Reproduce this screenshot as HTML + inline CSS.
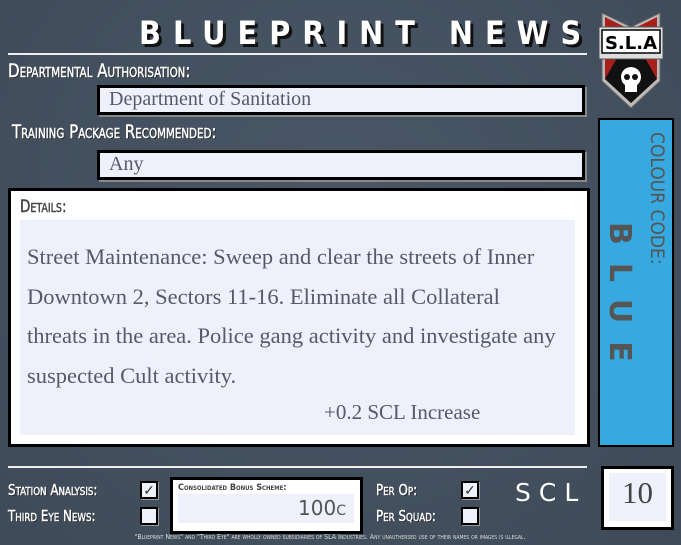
<!DOCTYPE html>
<html><head><meta charset="utf-8"><style>
*{margin:0;padding:0;box-sizing:border-box}
body{width:681px;height:545px;overflow:hidden;background:#44505e;background:radial-gradient(ellipse at 50% 40%,#4a5766,#3e4a58);position:relative;font-family:"Liberation Sans",sans-serif}
.a{position:absolute}
.lbl{color:#fff;font-family:"DejaVu Sans Condensed","Liberation Sans Narrow","Liberation Sans",sans-serif;font-variant:small-caps;text-shadow:1px 1px 0 #222;white-space:nowrap;transform-origin:0 0;transform:scaleX(0.88);-webkit-text-stroke:0.4px #fff}
.fld{background:#eef0fc;border:3px solid #000;box-shadow:2px 2px 0 #888;font-family:"Liberation Serif",serif;color:#555a6a;font-size:20px;padding-left:9px;line-height:23px}
.cb{width:18px;height:18px;background:#eef0fc;border:2px solid #000;box-shadow:1px 1px 0 #999;font-size:14px;line-height:14px;text-align:center;color:#333}
</style></head><body>
<div class="a" style="left:139px;top:14px;font-size:32px;font-weight:bold;color:#fff;letter-spacing:12px;text-shadow:3px 3px 0 #111;white-space:nowrap;font-family:'DejaVu Sans Condensed','DejaVu Sans',sans-serif">BLUEPRINT NEWS</div>
<div class="a" style="left:8px;top:53px;width:579px;height:2px;background:#eee"></div>
<div class="a lbl" style="left:8px;top:60px;font-size:19px">Departmental Authorisation:</div>
<div class="a fld" style="left:97px;top:85px;width:488px;height:30px">Department of Sanitation</div>
<div class="a lbl" style="left:12px;top:121px;font-size:19px">Training Package Recommended:</div>
<div class="a fld" style="left:97px;top:150px;width:488px;height:30px">Any</div>
<div class="a" style="left:8px;top:188px;width:582px;height:259px;background:#fff;border:3px solid #000"></div>
<div class="a" style="left:20px;top:197px;font-size:17px;color:#444;font-family:'DejaVu Sans Condensed',sans-serif;font-variant:small-caps;-webkit-text-stroke:0.4px #444;transform-origin:0 0;transform:scaleX(0.88)">Details:</div>
<div class="a" style="left:20px;top:220px;width:555px;height:215px;background:#eef0fc;font-family:'Liberation Serif',serif;font-size:22.5px;color:#555a6a;line-height:39.5px;padding:17px 0 0 7px;white-space:nowrap">Street Maintenance: Sweep and clear the streets of Inner<br>Downtown 2, Sectors 11-16. Eliminate all Collateral<br>threats in the area. Police gang activity and investigate any<br>suspected Cult activity.<div style="padding-left:297px;line-height:34px;font-size:21px">+0.2 SCL Increase</div></div>
<div class="a" style="left:598px;top:118px;width:76px;height:329px;background:#36a9e0;border:2px solid #000"></div>
<div class="a" style="left:646px;top:132px;transform-origin:0 0;transform:rotate(90deg) translateY(-22px);font-size:19px;color:#555;white-space:nowrap;font-family:'DejaVu Sans Condensed',sans-serif">COLOUR CODE:</div>
<div class="a" style="left:637px;top:222px;transform-origin:0 0;transform:rotate(90deg);font-size:30px;font-weight:bold;color:#555;letter-spacing:18px;white-space:nowrap;font-family:'DejaVu Sans',sans-serif">BLUE</div>
<svg class="a" style="left:599px;top:11px" width="64" height="100" viewBox="0 0 64 100">
<path d="M3 2 L3 70 L32 97 L61 70 L61 2 L32 16 Z" fill="#bbb" stroke="#666" stroke-width="1"/>
<path d="M6 6 L6 68 L32 92 L58 68 L58 6 L32 19 Z" fill="#a8201c"/>
<path d="M22 40 L6 68 L32 92 L58 68 L42 40 Z" fill="#111"/>
<rect x="0" y="16" width="64" height="32" fill="#ddd" stroke="#555"/>
<rect x="3" y="19" width="58" height="23" fill="#fff" stroke="#000" stroke-width="1.5"/>
<text x="32" y="38" text-anchor="middle" font-family="DejaVu Sans" font-weight="bold" font-size="18" fill="#000">S.L.A</text>
<ellipse cx="32" cy="66" rx="10" ry="10" fill="#fff"/>
<rect x="26" y="72" width="12" height="9" fill="#fff"/>
<circle cx="28" cy="66" r="3" fill="#111"/><circle cx="36" cy="66" r="3" fill="#111"/>
</svg>
<div class="a" style="left:8px;top:466px;width:579px;height:2px;background:#eee"></div>
<div class="a lbl" style="left:8px;top:481px;font-size:15px">Station Analysis:</div>
<div class="a lbl" style="left:8px;top:507px;font-size:15px">Third Eye News:</div>
<div class="a cb" style="left:140px;top:481px">✓</div>
<div class="a cb" style="left:140px;top:507px"></div>
<div class="a" style="left:170px;top:477px;width:193px;height:57px;background:#fff;border:3px solid #000"></div>
<div class="a" style="left:178px;top:483px;font-size:9px;font-weight:bold;color:#444;font-variant:small-caps;font-family:'DejaVu Sans Condensed',sans-serif">Consolidated Bonus Scheme:</div>
<div class="a" style="left:178px;top:494px;width:176px;height:29px;background:#eef0fc;text-align:right;padding-right:8px;font-size:20px;line-height:29px;color:#555;font-family:'DejaVu Sans',sans-serif;font-variant:small-caps">100c</div>
<div class="a lbl" style="left:376px;top:481px;font-size:15px">Per Op:</div>
<div class="a lbl" style="left:376px;top:507px;font-size:15px">Per Squad:</div>
<div class="a cb" style="left:461px;top:481px">✓</div>
<div class="a cb" style="left:461px;top:507px"></div>
<div class="a" style="left:515px;top:478px;font-size:25px;color:#fff;letter-spacing:8px;font-family:'DejaVu Sans',sans-serif">SCL</div>
<div class="a" style="left:601px;top:466px;width:73px;height:64px;background:#fff;border:3px solid #000"></div>
<div class="a" style="left:609px;top:473px;width:57px;height:48px;background:#eef0fc;text-align:center;font-family:'Liberation Serif',serif;font-size:31px;line-height:40px;color:#444">10</div>
<div class="a" style="left:0;top:533px;width:660px;text-align:center;font-size:7px;color:#ddd;font-variant:small-caps;white-space:nowrap;font-family:'DejaVu Sans Condensed',sans-serif">"Blueprint News" and "Third Eye" are wholly owned subsidiaries of SLA Industries. Any unauthersed use of their names or images is illegal.</div>
</body></html>
